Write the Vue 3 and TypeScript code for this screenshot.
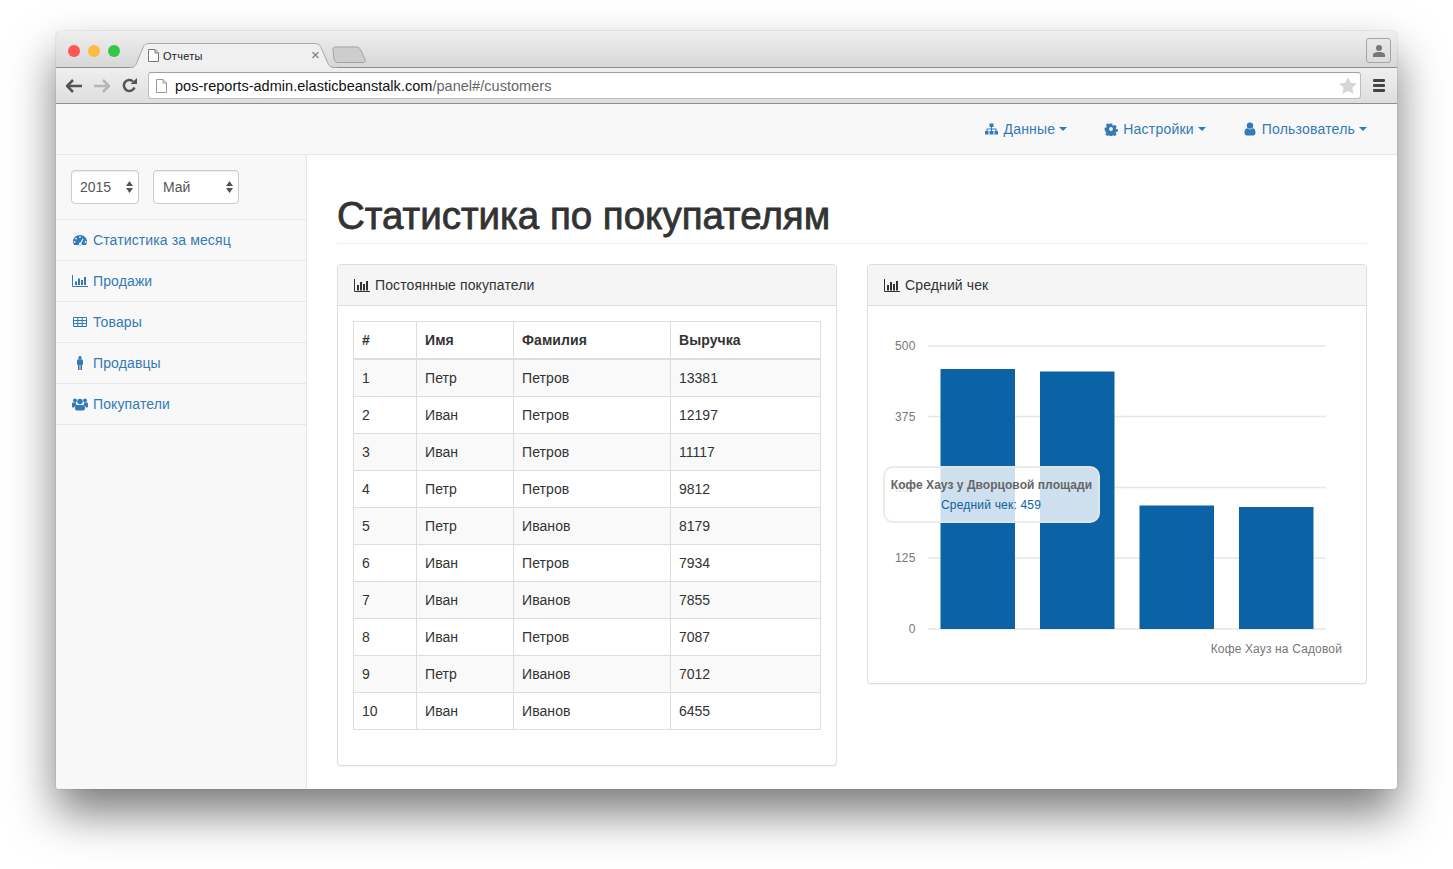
<template>
  <div class="page">
    <div class="window">
      <div class="tabstrip">
        <div class="lights">
          <span class="light red"></span>
          <span class="light yellow"></span>
          <span class="light green"></span>
        </div>
        <div class="tab">
          <svg class="tab-shape" width="208" height="25" viewBox="0 0 208 25">
            <path d="M0 25c4 0 6-1 7.500-4.500L14 4.500C15 2 16.500.5 20 .5h166c3 0 5 1.500 6 4l7 16c1.500 3.500 4 4.500 9 4.500z" fill="#f0f0f0" />
            <path d="M0 24.500c4 0 6-.5 7.500-4L14 4.500C15 2 16.500.5 20 .5h166c3 0 5 1.500 6 4l7 16c1.500 3.500 4 4 9 4" fill="none" stroke="#a8a8a8" />
          </svg>
          <svg class="file-icon" width="11" height="13" viewBox="0 0 11 13">
            <path d="M.5.500h6.500l3.500 3.500v8.500h-10zM7 .5v3.500h3.500" fill="#fff" stroke="#777" />
          </svg>
          <span class="tab-title">Отчеты</span>
          <span class="tab-close">×</span>
        </div>
        <svg class="new-tab" width="34" height="18" viewBox="0 0 34 18">
          <path d="M1 4c-.3-2 .7-3 2.500-3h21c2 0 3 1 4 2.500l4.500 10c.6 2-.5 3-2.500 3h-25c-2 0-3-1-3.500-3z" fill="#cdcdcd" stroke="#a3a3a3" />
        </svg>
        <div class="profile">
          <svg width="14" height="14" viewBox="0 0 14 14">
            <circle cx="7" cy="4" r="3" fill="#777" />
            <path d="M1 13v-2c0-2 2.500-3 6-3s6 1 6 3v2z" fill="#777" />
          </svg>
        </div>
      </div>

      <div class="toolbar">
        <svg class="tool-icon" width="16" height="14" viewBox="0 0 16 14">
          <path d="M7 1 1 7l6 6M1.500 7H16" fill="none" stroke="#555" stroke-width="2.600" />
        </svg>
        <svg class="tool-icon" width="16" height="14" viewBox="0 0 16 14">
          <path d="M9 1l6 6-6 6M14.500 7H0" fill="none" stroke="#b5b5b5" stroke-width="2.600" />
        </svg>
        <svg class="tool-icon" width="15" height="15" viewBox="0 0 15 15">
          <path d="M12.500 9.500A5.500 5.500 0 1 1 11 3.300" fill="none" stroke="#555" stroke-width="2.600" />
          <path d="M8.500 6H15V0z" fill="#555" />
        </svg>
        <div class="omnibox">
          <svg class="omni-file" width="11" height="14" viewBox="0 0 11 14">
            <path d="M.5.500h6.500l3.500 3.500v9.500h-10zM7 .5v3.500h3.500" fill="#fff" stroke="#999" />
          </svg>
          <span class="url">pos-reports-admin.elasticbeanstalk.com<span class="url-path">/panel#/customers</span></span>
          <svg class="star" width="18" height="17" viewBox="0 0 18 17">
            <path d="M9 0l2.700 5.800 6.300.7-4.700 4.300 1.300 6.200L9 13.900 3.400 17l1.300-6.200L0 6.500l6.300-.7z" fill="#d6d6d6" />
          </svg>
        </div>
        <div class="hamburger"><span></span><span></span><span></span></div>
      </div>

      <nav class="navbar">
        <a class="nav-link">
          <svg class="icon" width="15" height="14" viewBox="0 0 15 14">
            <path d="M5.500 1.500h4v3.500H8V6.500h4.500V9H14v3.500h-3.500V9h1V7.500H8V9h1.500v3.500h-4V9H7V7.500H3.500V9h1v3.500H1V9h1.500V6.500H7V5H5.500z" fill="currentColor" />
          </svg>
          Данные<i class="caret"></i>
        </a>
        <a class="nav-link">
          <svg class="icon" width="14" height="14" viewBox="0 0 14 14">
            <path fill-rule="evenodd" d="M5.600.7h2.800l.4 1.900 1.100.5 1.700-1 2 2-1 1.700.4 1.100 1.900.4v2.800l-1.900.4-.5 1.100 1 1.700-2 2-1.700-1-1.100.4-.4 1.900H5.600l-.4-1.900-1.100-.5-1.700 1-2-2 1-1.700-.4-1.100L-.4 8.400V5.600l1.900-.4.5-1.100-1-1.700 2-2 1.700 1 1.100-.4zM7 4.800a2.200 2.200 0 1 0 0 4.400 2.200 2.200 0 0 0 0-4.400z" fill="currentColor" transform="translate(1 1) scale(.857)" />
          </svg>
          Настройки<i class="caret"></i>
        </a>
        <a class="nav-link">
          <svg class="icon" width="14" height="14" viewBox="0 0 14 14">
            <circle cx="7" cy="3.600" r="3.200" fill="currentColor" />
            <path d="M1.500 11c0-3 1-4.700 2.700-4.700.8.700 1.700 1.100 2.800 1.100s2-.4 2.800-1.100c1.700 0 2.700 1.700 2.700 4.700 0 1.500-1 2.500-2.300 2.500H3.800c-1.300 0-2.300-1-2.300-2.500z" fill="currentColor" />
          </svg>
          Пользователь<i class="caret"></i>
        </a>
      </nav>

      <div class="body">
        <aside class="sidebar">
          <div class="filters">
            <div class="select-wrap year">
              <select><option>2015</option></select>
              <svg class="updown" width="7" height="12" viewBox="0 0 7 12"><path d="M3.500 0 7 5H0zM3.500 12 0 7h7z" fill="#555" /></svg>
            </div>
            <div class="select-wrap month">
              <select><option>Май</option></select>
              <svg class="updown" width="7" height="12" viewBox="0 0 7 12"><path d="M3.500 0 7 5H0zM3.500 12 0 7h7z" fill="#555" /></svg>
            </div>
          </div>
          <ul class="side-nav">
            <li>
              <a>
                <svg class="side-icon" width="15" height="14" viewBox="0 0 15 14">
                  <path fill-rule="evenodd" d="M7.500 2C3.400 2 .5 5 .5 8.500c0 1.300.4 2.500 1 3.500h12c.6-1 1-2.200 1-3.500C14.500 5 11.600 2 7.500 2zM7.500 3.200a.9.900 0 1 1 0 1.800.9.900 0 0 1 0-1.800zM3.500 4.700a.9.900 0 1 1 0 1.800.9.900 0 0 1 0-1.800zM2 8a.9.900 0 1 1 0 1.800A.9.900 0 0 1 2 8zM13 8a.9.900 0 1 1 0 1.800A.9.900 0 0 1 13 8zM10 5.500l1 .5-2 4a1.500 1.500 0 1 1-1-.5z" fill="currentColor" />
                </svg>
                Статистика за месяц
              </a>
            </li>
            <li>
              <a>
                <svg class="side-icon" width="16" height="14" viewBox="0 0 16 14">
                  <path d="M.5 1v11.500H16" fill="none" stroke="currentColor" />
                  <path d="M3 7.500h2V11H3zM6 4.500h2V11H6zM9 6h2v5H9zM12 3h2v8h-2z" fill="currentColor" />
                </svg>
                Продажи
              </a>
            </li>
            <li>
              <a>
                <svg class="side-icon" width="14" height="14" viewBox="0 0 14 14">
                  <path d="M.5 2.500h13v9H.5zM.5 5.500h13M.5 8.500h13M4.800 2.500v9M9.200 2.500v9" fill="none" stroke="currentColor" />
                </svg>
                Товары
              </a>
            </li>
            <li>
              <a>
                <svg class="side-icon" width="14" height="14" viewBox="0 0 14 14">
                  <circle cx="7" cy="1.800" r="1.700" fill="currentColor" />
                  <path d="M4 5c0-1 .7-1.700 1.500-1.700h3C9.300 3.300 10 4 10 5v3.700H9V14H7.400V9h-.8v5H5V8.700H4z" fill="currentColor" />
                </svg>
                Продавцы
              </a>
            </li>
            <li>
              <a>
                <svg class="side-icon" width="16" height="14" viewBox="0 0 16 14">
                  <circle cx="8" cy="4.500" r="2.700" fill="currentColor" />
                  <circle cx="3" cy="3.500" r="1.900" fill="currentColor" />
                  <circle cx="13" cy="3.500" r="1.900" fill="currentColor" />
                  <path d="M0 6.500c0-.5.700-1 1.500-1H4c-.2 1.200.2 2.200 1 3-1.500.2-2.700 1-3 2H.8C.3 10.500 0 10 0 9.500zM16 6.500c0-.5-.7-1-1.500-1H12c.2 1.200-.2 2.200-1 3 1.500.2 2.700 1 3 2h1.200c.5 0 .8-.5.8-1zM5 8h6c1.300 0 2 1.300 2 3.300 0 1.300-.6 2.200-1.800 2.200H4.800C3.600 13.500 3 12.600 3 11.300 3 9.300 3.700 8 5 8z" fill="currentColor" />
                </svg>
                Покупатели
              </a>
            </li>
          </ul>
        </aside>

        <main class="content">
          <h1 class="page-title">Статистика по покупателям</h1>
          <div class="panels">
            <section class="panel">
              <header class="panel-heading">
                <svg class="head-icon" width="16" height="13" viewBox="0 0 16 13">
                  <path d="M.5 0v12.500H16" fill="none" stroke="#333" />
                  <path d="M3 6h2v5.500H3zM6 3h2v8.500H6zM9 5h2v6.500H9zM12 2h2v9.500h-2z" fill="#333" />
                </svg>
                Постоянные покупатели
              </header>
              <div class="panel-body">
                <table>
                  <thead>
                    <tr>
                      <th class="c-num">#</th>
                      <th class="c-name">Имя</th>
                      <th class="c-last">Фамилия</th>
                      <th>Выручка</th>
                    </tr>
                  </thead>
                  <tbody>
                    <tr v-for="(row, i) in customers" :key="i">
                      <td>{{ i + 1 }}</td>
                      <td>{{ row.name }}</td>
                      <td>{{ row.last }}</td>
                      <td class="c-total">{{ row.total }}</td>
                    </tr>
                  </tbody>
                </table>
              </div>
            </section>

            <section class="panel chart-panel">
              <header class="panel-heading">
                <svg class="head-icon" width="16" height="13" viewBox="0 0 16 13">
                  <path d="M.5 0v12.500H16" fill="none" stroke="#333" />
                  <path d="M3 6h2v5.500H3zM6 3h2v8.500H6zM9 5h2v6.500H9zM12 2h2v9.500h-2z" fill="#333" />
                </svg>
                Средний чек
              </header>
              <div class="chart-body">
                <svg class="chart" width="498" height="377" viewBox="0 0 498 377">
                  <g v-for="tick in ticks" :key="tick.label">
                    <line x1="60" x2="458" :y1="tick.y" :y2="tick.y" stroke="#e6e6e6" stroke-width="1.400" />
                    <text x="47.500" :y="tick.y + 4" text-anchor="end" class="axis-text">{{ tick.label }}</text>
                  </g>
                  <rect v-for="bar in bars" :key="bar.x" :x="bar.x" :y="bar.y" width="74.500" :height="323 - bar.y" fill="#0b62a4" />
                  <text x="474" y="346.500" text-anchor="end" class="axis-text">Кофе Хауз на Садовой</text>
                </svg>
                <div class="tooltip">
                  <div class="tooltip-title">Кофе Хауз у Дворцовой площади</div>
                  <div class="tooltip-value">Средний чек: 459</div>
                </div>
              </div>
            </section>
          </div>
        </main>
      </div>
    </div>
  </div>
</template>

<script setup lang="ts">
const customers = [
  { name: "Петр", last: "Петров", total: 13381 },
  { name: "Иван", last: "Петров", total: 12197 },
  { name: "Иван", last: "Петров", total: 11117 },
  { name: "Петр", last: "Петров", total: 9812 },
  { name: "Петр", last: "Иванов", total: 8179 },
  { name: "Иван", last: "Петров", total: 7934 },
  { name: "Иван", last: "Иванов", total: 7855 },
  { name: "Иван", last: "Петров", total: 7087 },
  { name: "Петр", last: "Иванов", total: 7012 },
  { name: "Иван", last: "Иванов", total: 6455 },
];

const ticks = [
  { label: "500", y: 40 },
  { label: "375", y: 110.5 },
  { label: "250", y: 181.5 },
  { label: "125", y: 252 },
  { label: "0", y: 323 },
];

const bars = [
  { x: 72.5, y: 63 },
  { x: 172, y: 65.5 },
  { x: 271.5, y: 199.5 },
  { x: 371, y: 201 },
];
</script>

<style>
html,
body {
  background: #fff;
}
</style>

<style scoped>
.page {
  height: 869px;
  box-sizing: border-box;
  padding: 31px 56px 0;
  overflow: hidden;
}

.window {
  width: 1341px;
  height: 758px;
  display: flex;
  flex-direction: column;
  border-radius: 5px 5px 3px 3px;
  background: #fff;
  overflow: hidden;
  font-family: "Liberation Sans", Arial, sans-serif;
  font-size: 14px;
  letter-spacing: 0.12px;
  color: #333;
  box-sizing: border-box;
  box-shadow: 0 24px 46px rgba(0, 0, 0, 0.52), 0 0 1px 0 rgba(0, 0, 0, 0.5);
}

.tabstrip {
  height: 37px;
  flex: none;
  display: flex;
  align-items: flex-end;
  position: relative;
  background: linear-gradient(#efefef, #d7d7d7);
  border-bottom: 1px solid #8e8e8e;
  box-sizing: border-box;
}

.lights {
  display: flex;
  gap: 8px;
  position: absolute;
  left: 12px;
  top: 14px;
}

.light {
  width: 12px;
  height: 12px;
  border-radius: 50%;
}

.light.red { background: #fc5753; }
.light.yellow { background: #fdbc40; }
.light.green { background: #33c748; }

.tab {
  width: 208px;
  height: 25px;
  margin-left: 73px;
  margin-bottom: -1px;
  position: relative;
  display: flex;
  align-items: center;
  padding-left: 20px;
  box-sizing: border-box;
  flex: none;
  z-index: 1;
}

.tab-shape {
  position: absolute;
  left: 0;
  top: 0;
}

.file-icon {
  position: relative;
  margin-left: -1px;
}

.tab-title {
  position: relative;
  margin-left: 4px;
  font-size: 11px;
  letter-spacing: 0.3px;
  color: #222;
}

.tab-close {
  position: absolute;
  right: 17px;
  top: 4px;
  font-size: 15px;
  line-height: 16px;
  color: #777;
}

.new-tab {
  margin-left: -5px;
  margin-bottom: 3px;
  flex: none;
}

.profile {
  position: absolute;
  right: 6px;
  top: 7px;
  width: 25px;
  height: 25px;
  box-sizing: border-box;
  border: 1px solid #a5a5a5;
  border-radius: 3px;
  background: linear-gradient(#e8e8e8, #dcdcdc);
  display: flex;
  align-items: center;
  justify-content: center;
}

.toolbar {
  height: 36px;
  flex: none;
  display: flex;
  align-items: center;
  padding: 0 12px 0 10px;
  gap: 5px;
  background: linear-gradient(#efefef, #dedede);
  border-bottom: 1px solid #8e8e8e;
  box-sizing: border-box;
}

.tool-icon {
  flex: none;
  margin-right: 7px;
}

.omnibox {
  flex: 1;
  height: 27px;
  margin-left: -1px;
  box-sizing: border-box;
  display: flex;
  align-items: center;
  padding: 0 3px 0 7px;
  background: #fff;
  border: 1px solid #bdbdbd;
  border-top-color: #9f9f9f;
  border-radius: 3px;
}

.omni-file {
  flex: none;
}

.url {
  margin-left: 8px;
  flex: 1;
  font-size: 14.5px;
  letter-spacing: 0.03px;
  color: #111;
}

.url-path {
  color: #666;
}

.hamburger {
  width: 12px;
  margin-left: 7px;
  display: flex;
  flex-direction: column;
  gap: 2px;
}

.hamburger span {
  height: 3px;
  background: #444;
  border-radius: 1px;
}

.navbar {
  height: 51px;
  flex: none;
  box-sizing: border-box;
  display: flex;
  justify-content: flex-end;
  align-items: center;
  gap: 37px;
  padding: 0 30px 0 0;
  background: #f8f8f8;
  border-bottom: 1px solid #e7e7e7;
  letter-spacing: 0.2px;
}

.nav-link {
  display: flex;
  align-items: center;
  color: #337ab7;
}

.icon {
  margin-right: 5px;
}

.caret {
  display: inline-block;
  margin-left: 4px;
  border-top: 4px solid #337ab7;
  border-left: 4px solid transparent;
  border-right: 4px solid transparent;
}

.body {
  flex: 1;
  display: flex;
  min-height: 0;
}

.sidebar {
  width: 251px;
  flex: none;
  box-sizing: border-box;
  background: #f8f8f8;
  border-right: 1px solid #e7e7e7;
}

.filters {
  display: flex;
  gap: 14px;
  padding: 15px;
}

.select-wrap {
  position: relative;
  height: 34px;
}

.select-wrap.year { width: 68px; }
.select-wrap.month { width: 86px; }

.select-wrap select {
  appearance: none;
  width: 100%;
  height: 100%;
  box-sizing: border-box;
  padding: 0 8px;
  border: 1px solid #ccc;
  border-radius: 4px;
  background: #fff;
  color: #555;
  font: 14px "Liberation Sans", Arial, sans-serif;
  box-shadow: inset 0 1px 1px rgba(0, 0, 0, 0.075);
}

.select-wrap.month select {
  padding-left: 9px;
}

.updown {
  position: absolute;
  right: 6px;
  top: 11px;
}

.side-nav {
  list-style: none;
  margin: 0;
  padding: 0;
  border-bottom: 1px solid #e7e7e7;
}

.side-nav li {
  height: 41px;
  box-sizing: border-box;
  border-top: 1px solid #e7e7e7;
}

.side-nav a {
  height: 100%;
  display: flex;
  align-items: center;
  padding-left: 16px;
  color: #337ab7;
}

.side-icon {
  width: 16px;
  margin-right: 5px;
  flex: none;
}

.content {
  flex: 1;
  min-width: 0;
  padding: 0 30px;
}

.page-title {
  margin: 41px 0 20px;
  padding-bottom: 7px;
  height: 40px;
  box-sizing: content-box;
  border-bottom: 1px solid #eee;
  font-size: 38.5px;
  font-weight: 400;
  line-height: 40px;
  letter-spacing: 0;
  color: #333;
  -webkit-text-stroke: 0.8px #333;
}

.panels {
  display: flex;
  align-items: flex-start;
  gap: 30px;
}

.panel {
  width: 500px;
  flex: none;
  box-sizing: border-box;
  background: #fff;
  border: 1px solid #ddd;
  border-radius: 4px;
  box-shadow: 0 1px 1px rgba(0, 0, 0, 0.05);
}

.panel-heading {
  height: 41px;
  box-sizing: border-box;
  display: flex;
  align-items: center;
  padding-left: 16px;
  background: #f5f5f5;
  border-bottom: 1px solid #ddd;
  border-radius: 3px 3px 0 0;
}

.head-icon {
  margin-right: 5px;
}

.panel-body {
  padding: 15px;
}

table {
  width: 468px;
  table-layout: fixed;
  border-collapse: collapse;
  margin-bottom: 20px;
  background: #fff;
  border: 1px solid #ddd;
  letter-spacing: 0.08px;
}

th,
td {
  box-sizing: border-box;
  border: 1px solid #ddd;
  padding: 8px;
  text-align: left;
  line-height: 20px;
}

th {
  border-bottom-width: 2px;
  font-weight: 700;
}

.c-num { width: 63px; }
.c-name { width: 97px; }
.c-last { width: 157px; }
.c-total { letter-spacing: 0; }

tbody tr:nth-child(odd) {
  background: #f9f9f9;
}

.chart-body {
  position: relative;
  height: 377px;
}

.chart {
  display: block;
}

.axis-text {
  font-family: "Liberation Sans", Arial, sans-serif;
  font-size: 12px;
  letter-spacing: 0.15px;
  fill: #777;
}

.tooltip {
  position: absolute;
  left: 15px;
  top: 160px;
  width: 217px;
  height: 57px;
  box-sizing: border-box;
  border: 2px solid rgba(230, 230, 230, 0.8);
  border-radius: 10px;
  background: rgba(255, 255, 255, 0.8);
  text-align: center;
  font-size: 12px;
  padding-top: 10px;
}

.tooltip-title {
  font-weight: 700;
  color: #666;
  line-height: 14px;
  letter-spacing: 0.05px;
}

.tooltip-value {
  margin-top: 6px;
  line-height: 14px;
  letter-spacing: 0.2px;
  margin-left: -1px;
  color: #0b62a4;
}
</style>
